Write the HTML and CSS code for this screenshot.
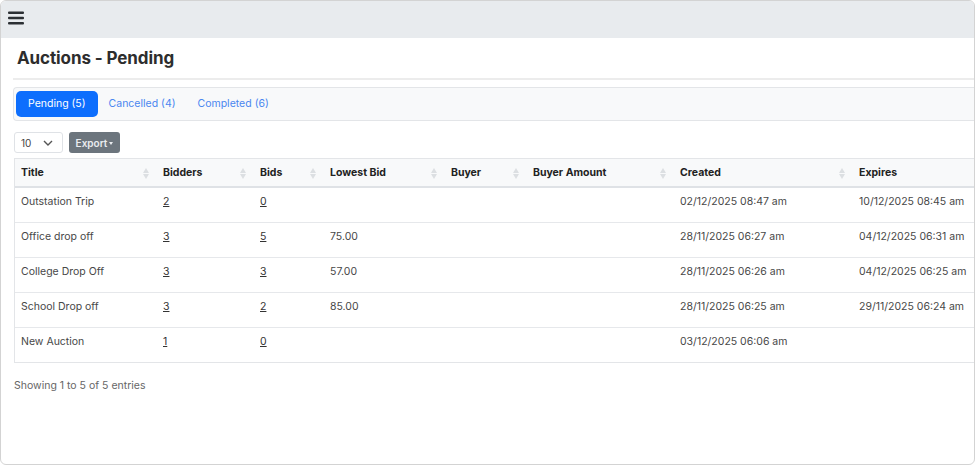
FILE: index.html
```html
<!DOCTYPE html>
<html lang="en">
<head>
    <meta charset="UTF-8">
    <meta name="viewport" content="width=device-width, initial-scale=1.0">
    <title>Auctions - Pending</title>
    <link rel="stylesheet" href="styles.css">
</head>
<body>
    <div class="window">
        <div class="topbar">
            <button class="menu-btn" aria-label="Menu">
                <svg width="16" height="14" viewBox="0 0 16 14">
                    <rect x="0" y="0.5" width="16" height="2.6" rx="1" fill="#2b2f33"/>
                    <rect x="0" y="5.7" width="16" height="2.6" rx="1" fill="#2b2f33"/>
                    <rect x="0" y="10.9" width="16" height="2.6" rx="1" fill="#2b2f33"/>
                </svg>
            </button>
        </div>

        <div class="content">
            <h1 class="page-title">Auctions - Pending</h1>

            <div class="tabs">
                <a class="tab active" href="#">Pending (5)</a>
                <a class="tab" href="#">Cancelled (4)</a>
                <a class="tab" href="#">Completed (6)</a>
            </div>

            <div class="toolbar">
                <div class="page-size">
                    <span>10</span>
                    <svg width="10" height="6" viewBox="0 0 10 6"><path d="M1 1l4 4 4-4" fill="none" stroke="#555" stroke-width="1.4"/></svg>
                </div>
                <button class="btn-export">Export <span class="caret"></span></button>
            </div>

            <div class="table-wrap">
                <table class="auctions">
                    <colgroup>
                        <col style="width:142px">
                        <col style="width:97px">
                        <col style="width:70px">
                        <col style="width:121px">
                        <col style="width:82px">
                        <col style="width:147px">
                        <col style="width:179px">
                        <col style="width:170px">
                    </colgroup>
                    <thead>
                        <tr>
                            <th class="sortable">Title</th>
                            <th class="sortable">Bidders</th>
                            <th class="sortable">Bids</th>
                            <th class="sortable">Lowest Bid</th>
                            <th class="sortable">Buyer</th>
                            <th class="sortable">Buyer Amount</th>
                            <th class="sortable">Created</th>
                            <th class="sortable">Expires</th>
                        </tr>
                    </thead>
                    <tbody>
                        <tr>
                            <td>Outstation Trip</td>
                            <td><a href="#">2</a></td>
                            <td><a href="#">0</a></td>
                            <td></td>
                            <td></td>
                            <td></td>
                            <td>02/12/2025 08:47 am</td>
                            <td>10/12/2025 08:45 am</td>
                        </tr>
                        <tr>
                            <td>Office drop off</td>
                            <td><a href="#">3</a></td>
                            <td><a href="#">5</a></td>
                            <td>75.00</td>
                            <td></td>
                            <td></td>
                            <td>28/11/2025 06:27 am</td>
                            <td>04/12/2025 06:31 am</td>
                        </tr>
                        <tr>
                            <td>College Drop Off</td>
                            <td><a href="#">3</a></td>
                            <td><a href="#">3</a></td>
                            <td>57.00</td>
                            <td></td>
                            <td></td>
                            <td>28/11/2025 06:26 am</td>
                            <td>04/12/2025 06:25 am</td>
                        </tr>
                        <tr>
                            <td>School Drop off</td>
                            <td><a href="#">3</a></td>
                            <td><a href="#">2</a></td>
                            <td>85.00</td>
                            <td></td>
                            <td></td>
                            <td>28/11/2025 06:25 am</td>
                            <td>29/11/2025 06:24 am</td>
                        </tr>
                        <tr>
                            <td>New Auction</td>
                            <td><a href="#">1</a></td>
                            <td><a href="#">0</a></td>
                            <td></td>
                            <td></td>
                            <td></td>
                            <td>03/12/2025 06:06 am</td>
                            <td></td>
                        </tr>
                    </tbody>
                </table>
            </div>

            <div class="table-info">Showing 1 to 5 of 5 entries</div>
        </div>
    </div>
</body>
</html>
```

FILE: styles.css
```css
* {
    box-sizing: border-box;
}

body {
    margin: 0;
    font-family: Inter, "Liberation Sans", Arial, sans-serif;
    color: #333;
    background-color: #fff;
}

.window {
    width: 975px;
    height: 465px;
    border: 1px solid #d3d3d3;
    border-radius: 6px;
    overflow: hidden;
    background-color: #fff;
}

.topbar {
    height: 37px;
    background-color: #e8ebee;
    display: flex;
    align-items: center;
    padding-left: 7px;
}

.menu-btn {
    background: none;
    border: none;
    padding: 0;
    margin-top: -3px;
    display: flex;
    cursor: pointer;
}

.content {
    padding: 0 0 0 12px;
}

.page-title {
    font-size: 17px;
    font-weight: 700;
    color: #2d2d2d;
    margin: 0;
    padding: 10px 0 10px 4px;
    border-bottom: 2px solid #ececec;
    letter-spacing: -0.1px;
}

.tabs {
    margin-top: 7px;
    height: 34px;
    display: flex;
    align-items: center;
    padding: 0 2px;
    background-color: #f8f9fa;
    border: 1px solid #e3e5e8;
    border-right: none;
    border-radius: 4px 0 0 4px;
}

.tab {
    font-size: 10.5px;
    color: #4a86f0;
    text-decoration: none;
    padding: 0 11px;
    height: 26px;
    line-height: 26px;
    border-radius: 5px;
    white-space: nowrap;
}

.tab.active {
    background-color: #0d6efd;
    color: #fff;
    padding: 0 12px;
}

.toolbar {
    display: flex;
    gap: 6px;
    margin-top: 11px;
    padding-left: 1px;
}

.page-size {
    width: 49px;
    height: 21px;
    border: 1px solid #dfe2e6;
    border-radius: 3px;
    display: flex;
    align-items: center;
    justify-content: space-between;
    padding: 0 9px 0 6px;
    font-size: 10px;
    color: #444;
}

.btn-export {
    height: 21px;
    width: 51px;
    padding: 0;
    border: none;
    border-radius: 3px;
    background-color: #6c757d;
    color: #e9ecef;
    font-family: inherit;
    font-size: 10px;
    font-weight: 600;
    display: flex;
    align-items: center;
    justify-content: center;
    gap: 2px;
}

.caret {
    border-left: 2.5px solid transparent;
    border-right: 2.5px solid transparent;
    border-top: 3px solid #e9ecef;
    margin-top: 1px;
}

.table-wrap {
    margin-top: 5px;
    margin-left: 1px;
    border: 1px solid #e3e5e8;
    border-right: none;
    overflow: hidden;
}

table {
    border-collapse: collapse;
    table-layout: fixed;
    width: 1008px;
}

th, td {
    font-size: 10.5px;
    text-align: left;
    padding: 0 6px;
    white-space: nowrap;
}

th {
    height: 28px;
    background-color: #f8f9fa;
    font-weight: 700;
    color: #222;
    border-bottom: 2px solid #dfe2e6;
    position: relative;
}

th.sortable::after {
    content: "";
    position: absolute;
    right: 8px;
    top: 9px;
    width: 0;
    height: 0;
    border-left: 3px solid transparent;
    border-right: 3px solid transparent;
    border-bottom: 5px solid #dcdfe2;
}

th.sortable::before {
    content: "";
    position: absolute;
    right: 8px;
    top: 15px;
    width: 0;
    height: 0;
    border-left: 3px solid transparent;
    border-right: 3px solid transparent;
    border-top: 5px solid #dcdfe2;
}

td {
    height: 35px;
    vertical-align: top;
    padding-top: 7px;
    color: #474747;
    border-bottom: 1px solid #e6e8eb;
}

tbody tr:last-child td {
    border-bottom: none;
}

td a {
    color: #333;
    text-decoration: underline;
}

.table-info {
    margin-top: 16px;
    margin-left: 1px;
    font-size: 10.5px;
    color: #666;
}
```
